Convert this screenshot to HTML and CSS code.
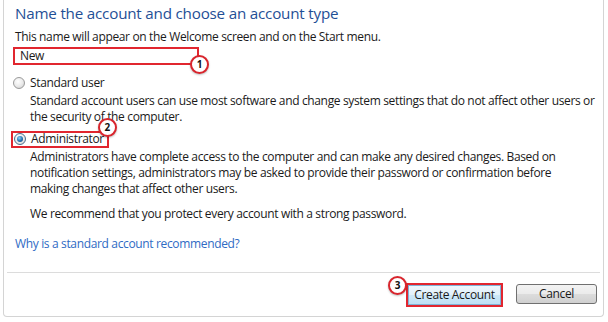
FILE: index.html
```html
<!DOCTYPE html>
<html>
<head>
<meta charset="utf-8">
<link rel="stylesheet" href="styles.css">
</head>
<body>
<div class="panel">
  <div class="content">
    <h1 class="title">Name the account and choose an account type</h1>
    <p class="hint">This name will appear on the Welcome screen and on the Start menu.</p>
    <div class="name-field">
      <span class="name-text">New</span>
      <span class="callout c1">1</span>
    </div>

    <div class="option">
      <div class="option-label">
        <span class="radio"></span>
        <span>Standard user</span>
      </div>
      <p class="desc">Standard account users can use most software and change system settings that do not affect other users or<br>the security of the computer.</p>
    </div>

    <div class="option">
      <div class="option-label">
        <span class="marked">
          <span class="radio checked"></span>
          <span>Administrator</span>
          <span class="callout c2">2</span>
        </span>
      </div>
      <p class="desc">Administrators have complete access to the computer and can make any desired changes. Based on<br>notification settings, administrators may be asked to provide their password or confirmation before<br>making changes that affect other users.</p>
      <p class="desc note">We recommend that you protect every account with a strong password.</p>
    </div>

    <a class="link" href="#">Why is a standard account recommended?</a>
  </div>

  <div class="footer">
    <span class="marked-btn">
      <button class="btn default">Create Account</button>
      <span class="callout c3">3</span>
    </span>
    <button class="btn">Cancel</button>
  </div>
</div>
</body>
</html>
```

FILE: styles.css
```css
html, body {
  margin: 0;
  padding: 0;
  background: #ffffff;
}

body {
  font-family: "Open Sans", "Noto Sans", sans-serif;
  font-size: 12px;
  color: #1a1a1a;
  letter-spacing: -0.35px;
}

.panel {
  box-sizing: border-box;
  width: 601px;
  height: 317px;
  margin-left: 3px;
  border: 1px solid #d4d4d4;
  border-top: none;
  border-radius: 0 0 4px 4px;
  display: flex;
  flex-direction: column;
}

.content {
  flex: 1;
  padding-left: 11px;
}

.title {
  margin: 2px 0 0;
  font-size: 15.2px;
  line-height: 22px;
  font-weight: normal;
  color: #1f4f96;
  letter-spacing: -0.2px;
}

.hint {
  margin: 5px 0 0;
  line-height: 16px;
}

.name-field {
  position: relative;
  box-sizing: border-box;
  width: 186px;
  height: 18px;
  margin: 2px 0 0 -2px;
  border: 2px solid #e1262f;
  padding-left: 5px;
  line-height: 14px;
}

.callout {
  position: absolute;
  box-sizing: border-box;
  width: 19px;
  height: 19px;
  border: 2px solid #d9252d;
  border-radius: 50%;
  background: #ffffff;
  font-weight: bold;
  font-size: 10px;
  line-height: 15px;
  text-align: center;
  color: #111;
  letter-spacing: 0;
  box-shadow: 0 1px 2px rgba(0, 0, 0, 0.25);
}

.c1 { right: -12px; top: 6px; }
.c2 { right: -10px; top: -15px; }
.c3 { left: -20px; top: -9px; }

.option {
  margin-top: 10px;
}

.option + .option {
  margin-top: 6px;
}

.option-label {
  display: flex;
  align-items: center;
  height: 16px;
  line-height: 16px;
}

.option-label > .radio {
  margin-left: -2px;
  margin-right: 5px;
}

.marked {
  position: relative;
  display: inline-flex;
  align-items: center;
  box-sizing: border-box;
  height: 17px;
  margin-left: -4px;
  padding: 0 3px 0 1px;
  border: 2px solid #e1262f;
}

.marked .radio {
  margin-right: 5px;
}

.radio {
  box-sizing: border-box;
  width: 12px;
  height: 12px;
  border-radius: 50%;
  border: 1px solid #9a9a9a;
  background: radial-gradient(circle at 40% 35%, #ffffff 0%, #e9e9e9 55%, #c9c9c9 100%);
  flex: none;
  display: inline-block;
  position: relative;
}

.radio.checked {
  border-color: #4d6b8a;
}

.radio.checked::after {
  content: "";
  position: absolute;
  left: 2px;
  top: 2px;
  width: 6px;
  height: 6px;
  border-radius: 50%;
  background: radial-gradient(circle at 40% 35%, #8fd0f5 0%, #2a79b8 50%, #14386a 100%);
}

.desc {
  margin: 2px 0 0 15px;
  line-height: 16px;
  white-space: nowrap;
}

.note {
  margin-top: 9px;
}

.link {
  display: block;
  margin-top: 14px;
  line-height: 16px;
  color: #2f6bc4;
  text-decoration: none;
}

.footer {
  height: 44px;
  margin: 0 3px;
  border-top: 1px solid #dcdcdc;
  box-sizing: border-box;
  padding: 11px 3px 0 0;
  display: flex;
  justify-content: flex-end;
  align-items: flex-start;
  gap: 13px;
}

.marked-btn {
  position: relative;
  display: inline-flex;
  border: 2px solid #e1262f;
  margin-top: -1px;
}

.btn {
  box-sizing: border-box;
  height: 20px;
  border: 1px solid #707070;
  border-radius: 3px;
  background: linear-gradient(#f3f3f3 0%, #ebebeb 48%, #dcdcdc 52%, #d0d0d0 100%);
  font-family: "Open Sans", "Noto Sans", sans-serif;
  font-size: 12px;
  letter-spacing: -0.35px;
  color: #1a1a1a;
  padding: 0;
  line-height: 16px;
  width: 81px;
}

.btn.default {
  width: 93px;
  border-radius: 0;
  border: 1px solid #7eb4d8;
  background: linear-gradient(#eef7fd 0%, #e1f1fb 48%, #cde8f8 52%, #bfe0f4 100%);
}
```
